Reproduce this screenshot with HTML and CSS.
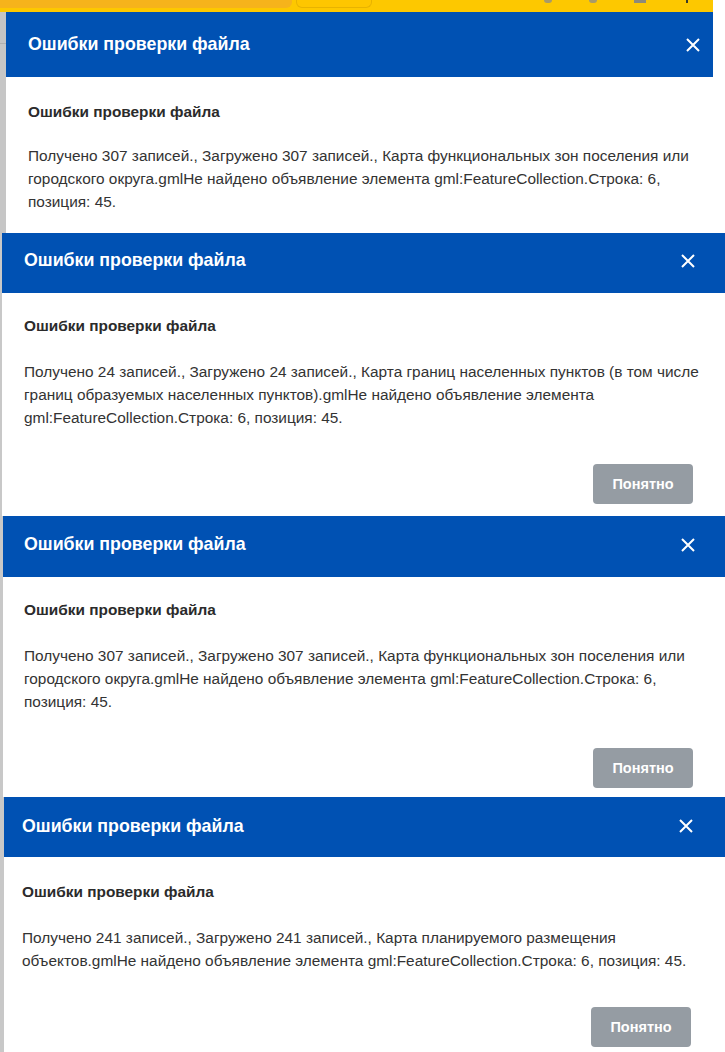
FILE: index.html
```html
<!DOCTYPE html>
<html lang="ru">
<head>
<meta charset="utf-8">
<title>Ошибки проверки файла</title>
<link rel="stylesheet" href="styles.css">
</head>
<body>
<div class="page">

  <section class="shot shot1">
    <div class="topbar">
      <span class="tb-orange"></span>
      <span class="tb-field"></span>
      <span class="tb-icons">
        <i class="tb-dot"></i><i class="tb-dot"></i><i class="tb-rect"></i><i class="tb-mini"></i>
      </span>
    </div>
    <div class="row">
      <div class="gutter"></div>
      <div class="modal">
        <header class="mhead">
          <h2 class="mtitle">Ошибки проверки файла</h2>
          <button class="close" aria-label="Закрыть"><svg viewBox="0 0 14 14" width="14" height="14"><path d="M1 1L13 13M13 1L1 13" stroke="#fff" stroke-width="2" fill="none"/></svg></button>
        </header>
        <div class="mbody">
          <h3 class="mhead2">Ошибки проверки файла</h3>
          <p class="mtext">Получено 307 записей., Загружено 307 записей., Карта функциональных зон поселения или городского округа.gmlНе найдено объявление элемента gml:FeatureCollection.Строка: 6, позиция: 45.</p>
        </div>
      </div>
      <div class="rest"></div>
    </div>
  </section>

  <section class="shot shot2">
    <div class="row">
      <div class="gutter"></div>
      <div class="modal">
        <header class="mhead">
          <h2 class="mtitle">Ошибки проверки файла</h2>
          <button class="close" aria-label="Закрыть"><svg viewBox="0 0 14 14" width="14" height="14"><path d="M1 1L13 13M13 1L1 13" stroke="#fff" stroke-width="2" fill="none"/></svg></button>
        </header>
        <div class="mbody">
          <h3 class="mhead2">Ошибки проверки файла</h3>
          <p class="mtext">Получено 24 записей., Загружено 24 записей., Карта границ населенных пунктов (в том числе границ образуемых населенных пунктов).gmlНе найдено объявление элемента gml:FeatureCollection.Строка: 6, позиция: 45.</p>
          <div class="mfoot"><button class="ok">Понятно</button></div>
        </div>
      </div>
    </div>
  </section>

  <section class="shot shot3">
    <div class="row">
      <div class="gutter"></div>
      <div class="modal">
        <header class="mhead">
          <h2 class="mtitle">Ошибки проверки файла</h2>
          <button class="close" aria-label="Закрыть"><svg viewBox="0 0 14 14" width="14" height="14"><path d="M1 1L13 13M13 1L1 13" stroke="#fff" stroke-width="2" fill="none"/></svg></button>
        </header>
        <div class="mbody">
          <h3 class="mhead2">Ошибки проверки файла</h3>
          <p class="mtext">Получено 307 записей., Загружено 307 записей., Карта функциональных зон поселения или городского округа.gmlНе найдено объявление элемента gml:FeatureCollection.Строка: 6, позиция: 45.</p>
          <div class="mfoot"><button class="ok">Понятно</button></div>
        </div>
      </div>
    </div>
  </section>

  <section class="shot shot4">
    <div class="row">
      <div class="gutter"></div>
      <div class="modal">
        <header class="mhead">
          <h2 class="mtitle">Ошибки проверки файла</h2>
          <button class="close" aria-label="Закрыть"><svg viewBox="0 0 14 14" width="14" height="14"><path d="M1 1L13 13M13 1L1 13" stroke="#fff" stroke-width="2" fill="none"/></svg></button>
        </header>
        <div class="mbody">
          <h3 class="mhead2">Ошибки проверки файла</h3>
          <p class="mtext">Получено 241 записей., Загружено 241 записей., Карта планируемого размещения объектов.gmlНе найдено объявление элемента gml:FeatureCollection.Строка: 6, позиция: 45.</p>
          <div class="mfoot"><button class="ok">Понятно</button></div>
        </div>
      </div>
    </div>
  </section>

</div>
</body>
</html>
```

FILE: styles.css
```css
* { box-sizing: border-box; }
html, body { margin: 0; padding: 0; background: #fff; }
body { font-family: "Liberation Sans", Arial, sans-serif; color: #333; }

.page { width: 725px; display: flex; flex-direction: column; }

.shot { display: flex; flex-direction: column; overflow: hidden; }
.shot1 { height: 233px; }
.shot2 { height: 283px; }
.shot3 { height: 281px; }
.shot4 { height: 255px; }

/* browser toolbar strip above first dialog */
.topbar {
  height: 12px; width: 713px; flex: none;
  background: #fdc800;
  display: flex; align-items: flex-start;
}
.tb-orange { width: 292px; height: 8px; background: #f6b31b; border-bottom-right-radius: 6px; }
.tb-field { width: 76px; height: 8px; margin-left: 4px; border: 1px solid #e8b300; border-top: none; border-radius: 0 0 6px 6px; background: #fec600; }
.tb-icons { display: flex; align-items: flex-start; margin-left: 172px; }
.tb-dot { width: 8px; height: 3px; border-radius: 0 0 4px 4px; background: #a79a6a; margin-right: 37px; }
.tb-rect { width: 12px; height: 3px; background: #8c8a7a; margin-right: 40px; }
.tb-mini { width: 2px; height: 3px; background: #3a3a2a; }

.row { flex: 1; display: flex; min-height: 0; }
.gutter { flex: none; background: #c8c8c8; }
.shot1 .gutter { width: 6px; background: linear-gradient(#c4c4c4 0 31px, #b0b0b0 31px 32px, #c6c6c6 32px); }
.shot2 .gutter { width: 2px; }
.shot3 .gutter { width: 3px; }
.shot4 .gutter { width: 4px; }
.rest { flex: 1; background: #fff; }

.modal { display: flex; flex-direction: column; background: #fff; }
.shot1 .modal { width: 707px; flex: none; }
.shot2 .modal, .shot3 .modal, .shot4 .modal { flex: 1; }

.mhead {
  flex: none; display: flex; align-items: center; justify-content: space-between;
  background: #0051b3; color: #fff;
}
.shot1 .mhead { height: 65px; padding: 0 13px 0 22px; }
.shot2 .mhead { height: 60px; padding: 0 30px 4px 22px; }
.shot3 .mhead { height: 61px; padding: 0 30px 4px 21px; }
.shot4 .mhead { height: 60px; padding: 0 32px 2px 18px; }

.mtitle { margin: 0; font-size: 17.8px; font-weight: 700; line-height: 22px; }
.shot1 .mtitle, .shot2 .mtitle, .shot3 .mtitle { margin-bottom: 2px; }
.close { border: 0; background: none; padding: 0; width: 14px; height: 14px; display: flex; cursor: pointer; }

.mbody { padding: 23px 10px 0 22px; }
.shot1 .mbody { padding-top: 25px; }
.shot3 .mbody { padding-left: 21px; }
.shot4 .mbody { padding-left: 18px; padding-top: 25px; }

.mhead2 { margin: 0 0 24px; font-size: 15.4px; font-weight: 700; line-height: 20px; color: #2b2b2b; }
.shot1 .mhead2 { margin-bottom: 22px; }
.mtext { margin: 0; font-size: 15.4px; line-height: 23px; color: #333; }

.mfoot { display: flex; justify-content: flex-end; margin-top: 35px; padding-right: 22px; }
.shot4 .mfoot { padding-right: 24px; }
.ok {
  width: 100px; height: 40px; border: 0; border-radius: 4px;
  background: #959ca3; color: #fff;
  font-family: "Liberation Sans", Arial, sans-serif; font-size: 14.5px; font-weight: 700;
}
```
